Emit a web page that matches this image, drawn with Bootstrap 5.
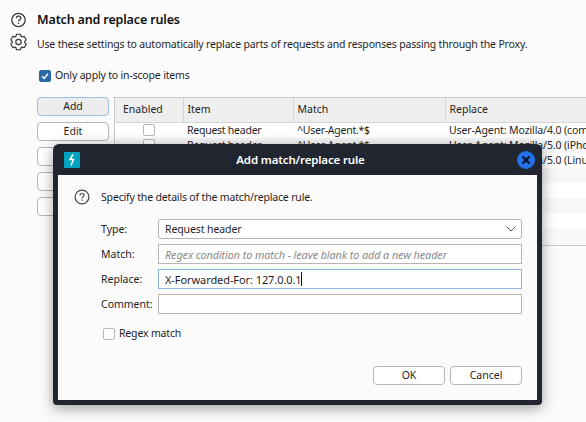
<!DOCTYPE html>
<html lang="en">
<head>
    <meta charset="UTF-8">
    <title>Match and replace rules</title>
    <link href="https://cdn.jsdelivr.net/npm/bootstrap@5.3.0/dist/css/bootstrap.min.css" rel="stylesheet">
    <style>
        body {
            width: 586px;
            height: 422px;
            overflow: hidden;
            position: relative;
            background: #fbfbfb;
            color: #1f1f1f;
            font-family: "Noto Sans", sans-serif;
            font-size: 10.5px;
            letter-spacing: -.17px;
            line-height: 15px;
        }
        .settings-head { padding: 11px 0 0 10px; }
        .head-icons { width: 27px; }
        .head-icons svg { display: block; }
        .settings-title { font-size: 12.5px; font-weight: 600; letter-spacing: -.15px; line-height: 17px; margin: 0; color: #111; }
        .settings-desc { margin: 9px 0 0; }
        .scope-row { margin: 16px 0 0 39px; height: 15px; }
        .tick { width: 12px; height: 12px; margin: 0; border-radius: 2px; border: 1px solid #b9b9b9; background: #fff; flex: none; }
        .tick-on { background: #2a6aa8; border-color: #2a6aa8; }
        .rules-area { margin-top: 14px; padding-left: 37px; gap: 5px; }
        .rule-actions { width: 72px; gap: 6px; flex: none; }
        .burp-btn {
            height: 19px;
            padding: 0;
            font-size: 10.5px;
            letter-spacing: 0;
            line-height: 17px;
            color: #1f1f1f;
            background: #fff;
            border: 1px solid #b9b5b5;
            border-radius: 4px;
        }
        .burp-btn-active { background: #ececec; border-color: #9dc0e6; }
        .rules-wrap { width: 472px; height: 149px; border-top: 1px solid #c9c9c9; border-bottom: 1px solid #c9c9c9; border-left: 1px solid #c9c9c9; background: #f9f9f9; overflow: hidden; }
        .rules-grid { width: 471px; table-layout: fixed; border-collapse: collapse; }
        .rules-grid th { height: 24px; padding: 0 4px; font-weight: 400; letter-spacing: 0; background: #eeeeee; border-right: 1px solid #d5d5d5; border-bottom: 1px solid #d5d5d5; white-space: nowrap; }
        .rules-grid th:first-child { padding-left: 8px; }
        .rules-grid td { height: 15px; padding: 0 4px; letter-spacing: -.25px; white-space: nowrap; overflow: hidden; }
        .rules-grid td:last-child { letter-spacing: -.1px; }
        .rules-grid tr:nth-child(odd) td { background: #fff; }
        .rules-grid tr:nth-child(even) td { background: #f7f7f7; }
        .rules-grid .tick { display: block; margin: 0 auto; }
        .rule-dialog {
            position: absolute;
            left: 53px;
            top: 144px;
            width: 489px;
            height: 261px;
            background: #21252f;
            border-radius: 6px 6px 4px 4px;
            box-shadow: 0 3px 14px rgba(0, 0, 0, .38);
            padding: 0 5px 5px;
        }
        .dialog-bar { height: 31px; padding-left: 6px; color: #fff; font-size: 11.5px; font-weight: 600; letter-spacing: -.15px; position: relative; }
        .dialog-logo { position: absolute; left: 6px; top: 8px; width: 16px; height: 16px; background: #00a3bf; }
        .dialog-close { position: absolute; right: 2px; top: 7px; width: 18px; height: 18px; border-radius: 50%; background: #2271e8; border: 0; padding: 0; }
        .dialog-logo svg, .dialog-close svg { display: block; }
        .dialog-body { height: 225px; background: #fbfbfb; padding: 14px 15px 0 16px; }
        .dialog-intro { height: 16px; gap: 11px; }
        .field-list { margin: 14px 0 0 27px; gap: 5px; }
        .field-row { height: 20px; position: relative; }
        .field-label { width: 57px; flex: none; letter-spacing: 0; }
        .field-input {
            width: 364px;
            height: 20px;
            min-height: 0;
            padding: 0 6px;
            font-size: 11px;
            letter-spacing: -.08px;
            line-height: 18px;
            color: #1f1f1f;
            border: 1px solid #b9b5b5;
            border-radius: 0;
            background-color: #fff;
        }
        .field-input::placeholder { color: #8a8a8a; font-style: italic; opacity: 1; font-size: 10.8px; }
        .field-input:focus { box-shadow: none; border-color: #b9b5b5; }
        .field-focus, .field-focus:focus { border-color: #8db4e4; }
        .field-select {
            border-radius: 3px;
            font-size: 10.5px;
            letter-spacing: -.1px;
            padding: 0 6px;
            background-image: url("data:image/svg+xml,%3csvg xmlns='http://www.w3.org/2000/svg' viewBox='0 0 10 6'%3e%3cpath fill='none' stroke='%23555' d='M.5.5L5 5l4.5-4.5'/%3e%3c/svg%3e");
            background-size: 10px 6px;
            background-position: right 5px center;
        }
        .text-caret { position: absolute; left: 200px; top: 3px; width: 1px; height: 14px; background: #111; }
        .regex-row { margin: 12px 0 0 29px; gap: 4px; height: 15px; }
        .dialog-actions { margin-top: 25px; gap: 5px; }
        .dialog-actions .burp-btn { width: 72px; }
    </style>
</head>
<body>
    <div class="settings-head d-flex">
        <div class="head-icons">
            <svg width="18" height="18" viewBox="0 0 18 18" fill="none" stroke="#3a3a3a" stroke-width="1.3">
                <circle cx="8.5" cy="9" r="6.7"/>
                <path d="M6.4 7.3c0-1.3 1-2.1 2.2-2.1s2.2.8 2.2 2c0 1.6-2.2 1.7-2.2 3.4"/>
                <path d="M8.6 11.7v1.3"/>
            </svg>
            <svg class="mt-1" width="18" height="18" viewBox="0 0 18 18" fill="none" stroke="#3a3a3a" stroke-width="1.2" stroke-linejoin="round">
                <g transform="translate(8.5 9)">
                    <circle r="2.7"/>
                    <path d="M-2.72-5.57L-1.94-7.76H1.94L2.72-5.57L3.47-5.14L5.75-5.56L7.69-2.2L6.18-.43V.43L7.69 2.2L5.75 5.56L3.47 5.14L2.72 5.57L1.94 7.76H-1.94L-2.72 5.57L-3.47 5.14L-5.75 5.56L-7.69 2.2L-6.18 .43V-.43L-7.69-2.2L-5.75-5.56L-3.47-5.14Z"/>
                </g>
            </svg>
        </div>
        <div>
            <h1 class="settings-title">Match and replace rules</h1>
            <p class="settings-desc">Use these settings to automatically replace parts of requests and responses passing through the Proxy.</p>
        </div>
    </div>

    <div class="scope-row d-flex align-items-center gap-1">
        <span class="tick tick-on d-flex align-items-center justify-content-center">
            <svg width="10" height="10" viewBox="0 0 10 10" fill="none" stroke="#fff" stroke-width="1.4"><path d="M2 5.2l2.1 2.2L8 2.8"/></svg>
        </span>
        <span>Only apply to in-scope items</span>
    </div>

    <div class="rules-area d-flex">
        <div class="rule-actions d-flex flex-column">
            <button class="btn burp-btn burp-btn-active">Add</button>
            <button class="btn burp-btn">Edit</button>
            <button class="btn burp-btn">Remove</button>
            <button class="btn burp-btn">Up</button>
            <button class="btn burp-btn">Down</button>
        </div>
        <div class="rules-wrap">
            <table class="rules-grid">
                <colgroup>
                    <col width="68"><col width="110"><col width="152"><col width="141">
                </colgroup>
                <thead>
                    <tr><th>Enabled</th><th>Item</th><th>Match</th><th>Replace</th></tr>
                </thead>
                <tbody>
                    <tr><td><span class="tick"></span></td><td>Request header</td><td>^User-Agent.*$</td><td>User-Agent: Mozilla/4.0 (compatible; MSIE)</td></tr>
                    <tr><td><span class="tick"></span></td><td>Request header</td><td>^User-Agent.*$</td><td>User-Agent: Mozilla/5.0 (iPhone; CPU)</td></tr>
                    <tr><td><span class="tick"></span></td><td>Request header</td><td>^User-Agent.*$</td><td>User-Agent: Mozilla/5.0 (Linux; Android)</td></tr>
                    <tr><td></td><td></td><td></td><td></td></tr>
                    <tr><td></td><td></td><td></td><td></td></tr>
                    <tr><td></td><td></td><td></td><td></td></tr>
                    <tr><td></td><td></td><td></td><td></td></tr>
                </tbody>
            </table>
        </div>
    </div>

    <div class="rule-dialog">
        <div class="dialog-bar d-flex align-items-center justify-content-center">
            <span class="dialog-logo">
                <svg width="16" height="16" viewBox="0 0 16 16" fill="none" stroke="#fff" stroke-width="1.5"><path d="M9 2.5L6 7.5h3.5L7 13.5"/></svg>
            </span>
            <span>Add match/replace rule</span>
            <button class="dialog-close" aria-label="Close">
                <svg width="18" height="18" viewBox="0 0 18 18" fill="none" stroke="#0c1320" stroke-width="2.2"><path d="M5.5 5.5l7 7M12.5 5.5l-7 7"/></svg>
            </button>
        </div>
        <div class="dialog-body">
            <div class="dialog-intro d-flex align-items-center">
                <svg width="16" height="16" viewBox="0 0 16 16" fill="none" stroke="#444" stroke-width="1.2">
                    <circle cx="8" cy="8" r="6.9"/>
                    <path d="M6 6.4c0-1.2.9-1.9 2-1.9s2 .7 2 1.8c0 1.5-2 1.6-2 3.1"/>
                    <path d="M8 10.4v1.3"/>
                </svg>
                <span>Specify the details of the match/replace rule.</span>
            </div>
            <div class="field-list d-flex flex-column">
                <div class="field-row d-flex align-items-center">
                    <label class="field-label">Type:</label>
                    <select class="form-select field-input field-select"><option>Request header</option></select>
                </div>
                <div class="field-row d-flex align-items-center">
                    <label class="field-label">Match:</label>
                    <input class="form-control field-input" placeholder="Regex condition to match - leave blank to add a new header">
                </div>
                <div class="field-row d-flex align-items-center">
                    <label class="field-label">Replace:</label>
                    <input class="form-control field-input field-focus" value="X-Forwarded-For: 127.0.0.1">
                    <span class="text-caret"></span>
                </div>
                <div class="field-row d-flex align-items-center">
                    <label class="field-label">Comment:</label>
                    <input class="form-control field-input">
                </div>
            </div>
            <div class="regex-row d-flex align-items-center">
                <span class="tick"></span>
                <span>Regex match</span>
            </div>
            <div class="dialog-actions d-flex justify-content-end">
                <button class="btn burp-btn">OK</button>
                <button class="btn burp-btn">Cancel</button>
            </div>
        </div>
    </div>

    <script src="https://cdn.jsdelivr.net/npm/bootstrap@5.3.0/dist/js/bootstrap.bundle.min.js"></script>
</body>
</html>
